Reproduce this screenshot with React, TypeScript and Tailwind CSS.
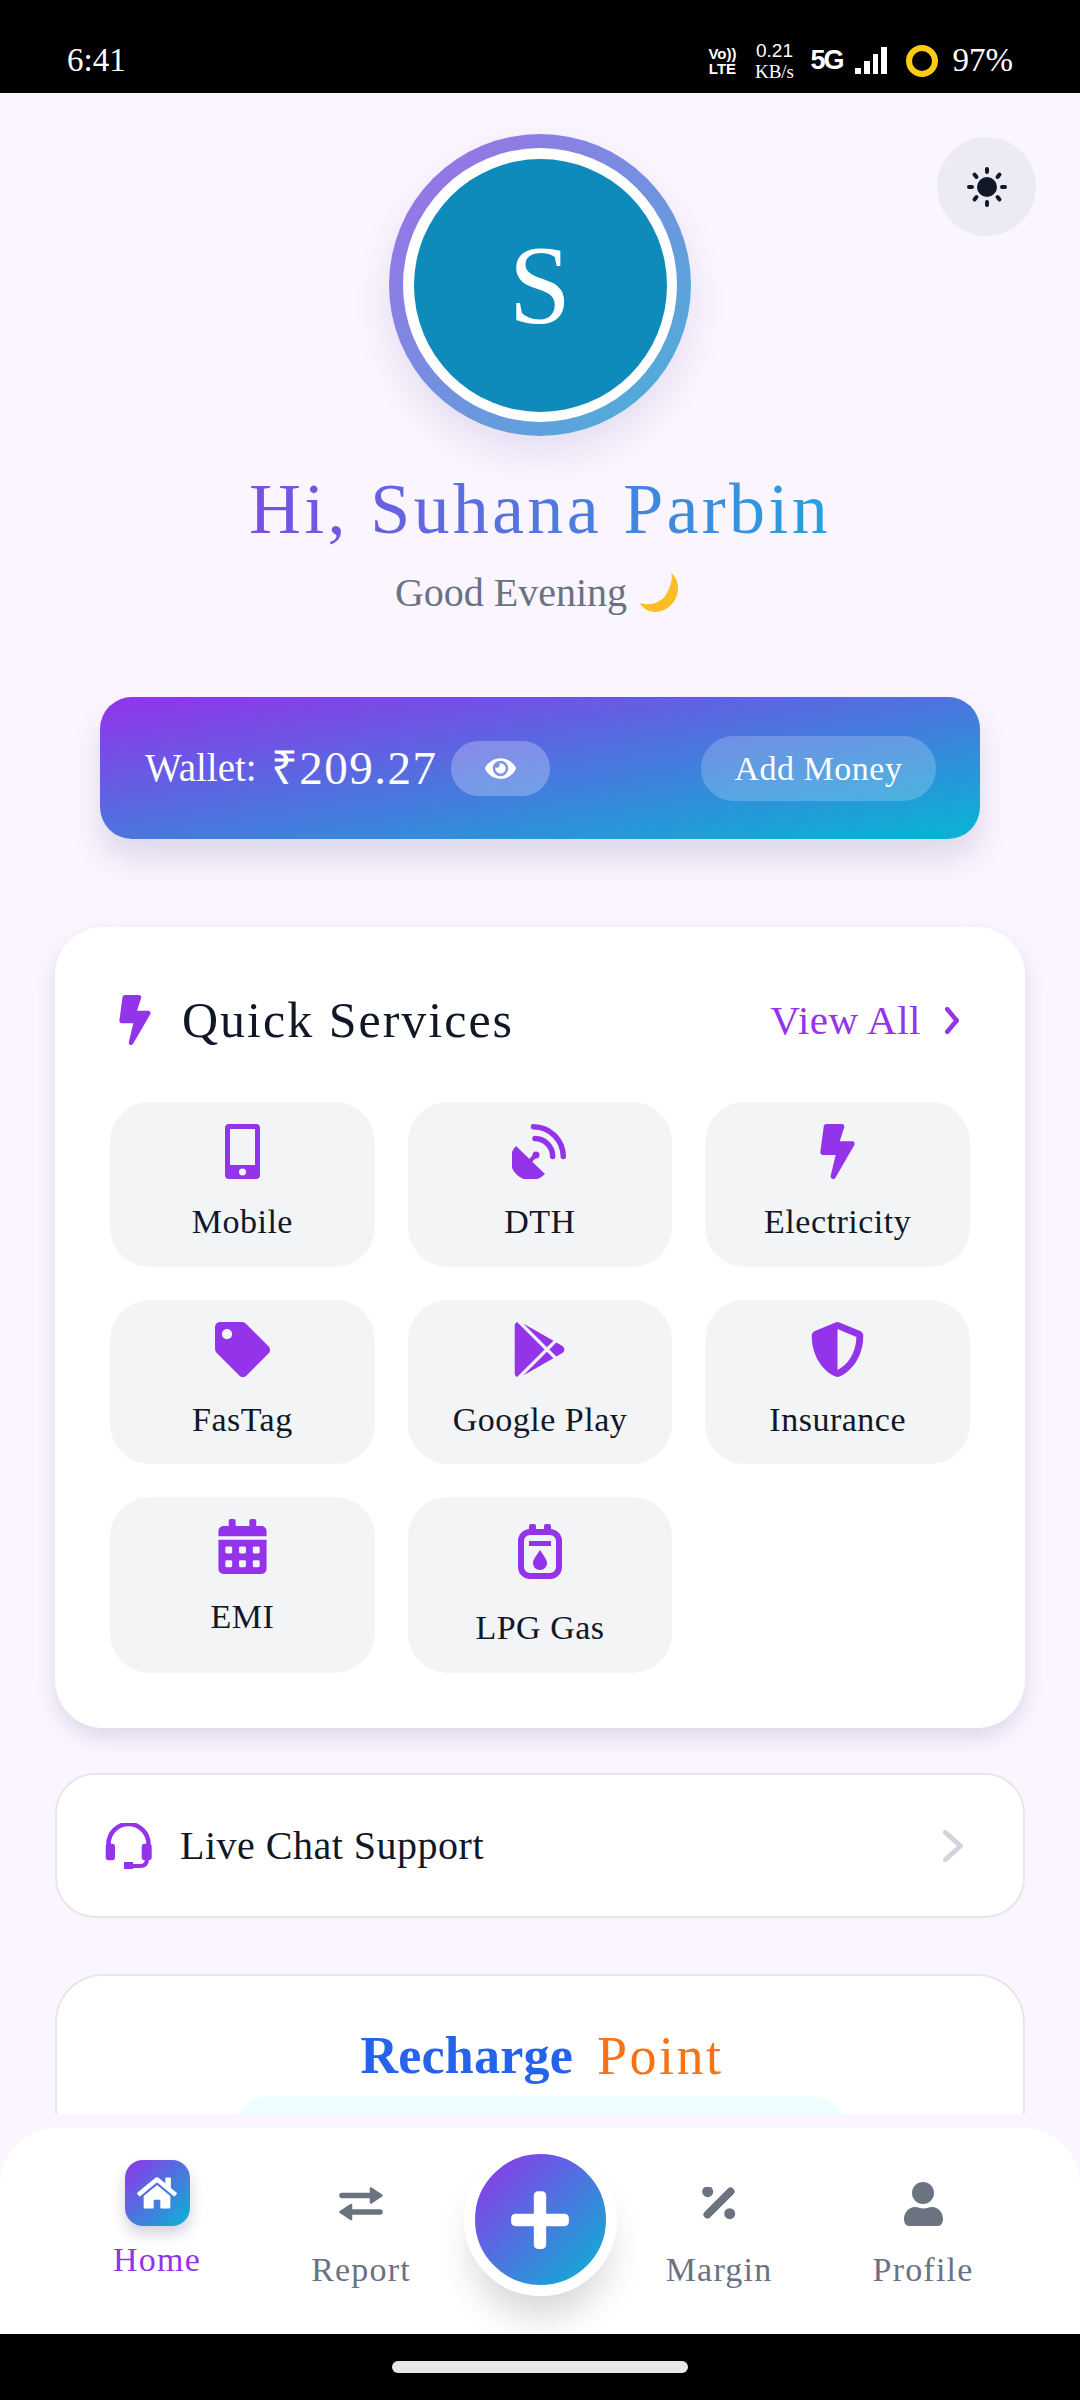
import type { ReactNode } from "react";
import {
	FaBolt,
	FaCalendarAlt,
	FaEye,
	FaGooglePlay,
	FaHome,
	FaPlus,
	FaShieldAlt,
	FaTag,
} from "react-icons/fa";

function GasIcon() {
	return (
		<svg width="44" height="55" viewBox="0 0 44 55" fill="none">
			<rect x="11" y="0" width="7" height="10" rx="2" fill="#9333ea" />
			<rect x="26" y="0" width="7" height="10" rx="2" fill="#9333ea" />
			<rect x="3" y="8" width="38" height="44" rx="9" stroke="#9333ea" strokeWidth="6" />
			<rect x="11" y="17" width="22" height="5" fill="#9333ea" />
			<path d="M22 26 C25 31 29 35 29 39 C29 43 26 46 22 46 C18 46 15 43 15 39 C15 35 19 31 22 26 Z" fill="#9333ea" />
		</svg>
	);
}

function SunIcon() {
	return (
		<svg width="40" height="40" viewBox="0 0 40 40" fill="none" stroke="#111827" strokeWidth="4" strokeLinecap="round">
			<circle cx="20" cy="20" r="10" fill="#111827" stroke="none" />
			<path d="M20 2v3M20 35v3M2 20h3M35 20h3M7.5 7.5l2 2.5M32.5 7.5l-2 2.5M7.5 32.5l2-2.5M32.5 32.5l-2-2.5" />
		</svg>
	);
}

function MobileIcon() {
	return (
		<svg width="35" height="55" viewBox="0 0 35 55" fill="#9333ea" fillRule="evenodd">
			<path d="M4 0h27a4 4 0 0 1 4 4v47a4 4 0 0 1-4 4H4a4 4 0 0 1-4-4V4a4 4 0 0 1 4-4Z M5 5v36h25V5Z M17.5 44.5a3.5 3.5 0 1 0 0 7 3.5 3.5 0 0 0 0-7Z" />
		</svg>
	);
}

function DishIcon() {
	return (
		<svg width="55" height="55" viewBox="0 0 55 55" fill="none">
			<path d="M4 22 A20 20 0 0 0 33 50 Z" fill="#9333ea" />
			<path d="M18 37 L24 31" stroke="#9333ea" strokeWidth="4" />
			<circle cx="24" cy="31" r="3.5" fill="#9333ea" />
			<path d="M23 14.5 A18 18 0 0 1 40.7 32.5" stroke="#9333ea" strokeWidth="5.5" strokeLinecap="round" />
			<path d="M21.5 2.8 A30 30 0 0 1 51.3 32.5" stroke="#9333ea" strokeWidth="5.5" strokeLinecap="round" />
		</svg>
	);
}

function HeadsetIcon() {
	return (
		<svg width="47" height="46" viewBox="0 0 47 46" fill="none" stroke="#9333ea">
			<path d="M3.5 24V21A20 20 0 0 1 43.5 21V24" strokeWidth="4.5" />
			<rect x="0.7" y="20.7" width="9.3" height="16.6" rx="3" fill="#9333ea" stroke="none" />
			<rect x="36.7" y="20.7" width="10" height="16.6" rx="3" fill="#9333ea" stroke="none" />
			<path d="M42 36C42 41 39 43 35 43H24" strokeWidth="4" />
			<rect x="19" y="39" width="9" height="7.3" fill="#9333ea" stroke="none" />
		</svg>
	);
}

function ExchangeIcon() {
	return (
		<svg width="44" height="34" viewBox="0 0 44 34" fill="#6b7280" stroke="#6b7280" strokeLinejoin="round">
			<path d="M3 8.5H33" strokeWidth="5.5" strokeLinecap="round" />
			<path d="M32 1.5L42.5 8.5L32 15.5Z" strokeWidth="2.5" />
			<path d="M41 25H11" strokeWidth="5.5" strokeLinecap="round" />
			<path d="M12 18L1.5 25L12 32Z" strokeWidth="2.5" />
		</svg>
	);
}

function PercentIcon() {
	return (
		<svg width="34" height="34" viewBox="0 0 34 34" fill="#6b7280">
			<circle cx="5.7" cy="4.7" r="5.5" />
			<circle cx="27.7" cy="26.7" r="5.5" />
			<path d="M5.5 27.5L28.5 4.5" stroke="#6b7280" strokeWidth="8" strokeLinecap="round" />
		</svg>
	);
}

function UserIcon() {
	return (
		<svg width="39" height="44" viewBox="0 0 39 44" fill="#6b7280">
			<circle cx="19" cy="11" r="11" />
			<path d="M0 37C0 30 5 25 11 25C14 25 16 26.5 19.5 26.5C23 26.5 25 25 28 25C34 25 39 30 39 37C39 41 37 44 34 44H5C2 44 0 41 0 37Z" />
		</svg>
	);
}

function Chevron({ color, w, h, stroke }: { color: string; w: number; h: number; stroke: number }) {
	const pad = stroke / 2;
	return (
		<svg width={w} height={h} viewBox={`0 0 ${w} ${h}`} fill="none" stroke={color} strokeWidth={stroke} strokeLinecap="round" strokeLinejoin="round">
			<path d={`M${pad} ${pad}L${w - pad} ${h / 2}L${pad} ${h - pad}`} />
		</svg>
	);
}

const services: { label: string; icon: ReactNode; tile: string; gap: string }[] = [
	{ label: "Mobile", icon: <MobileIcon />, tile: "pt-[22px]", gap: "mt-[21px]" },
	{ label: "DTH", icon: <DishIcon />, tile: "pt-[22px]", gap: "mt-[21px]" },
	{ label: "Electricity", icon: <FaBolt size={55} />, tile: "pt-[22px]", gap: "mt-[21px]" },
	{ label: "FasTag", icon: <FaTag size={55} />, tile: "pt-[22px]", gap: "mt-[21px]" },
	{ label: "Google Play", icon: <FaGooglePlay size={55} />, tile: "pt-[22px]", gap: "mt-[21px]" },
	{ label: "Insurance", icon: <FaShieldAlt size={55} />, tile: "pt-[22px]", gap: "mt-[21px]" },
	{ label: "EMI", icon: <FaCalendarAlt size={55} />, tile: "pt-[22px]", gap: "mt-[21px]" },
	{ label: "LPG Gas", icon: <GasIcon />, tile: "pt-[27px]", gap: "mt-[27px]" },
];

function StatusBar() {
	return (
		<div className="flex h-[93px] shrink-0 items-center bg-black pl-[67px] pr-[67px] pt-[28px] text-white">
			<span className="text-[33px] leading-none">6:41</span>
			<div className="ml-auto flex items-center">
				<div className="flex w-[28px] flex-col items-center font-['Liberation_Sans',sans-serif] text-[15px] font-bold leading-[15px]">
					<span>Vo))</span>
					<span>LTE</span>
				</div>
				<div className="ml-[11px] flex w-[54px] flex-col items-center text-[19px] leading-[21px]">
					<span className="font-['Liberation_Sans',sans-serif]">0.21</span>
					<span>KB/s</span>
				</div>
				<span className="ml-[9px] font-['Liberation_Sans',sans-serif] text-[27px] font-bold leading-none tracking-[-2px]">5G</span>
				<svg className="ml-[12px]" width="32" height="28" viewBox="0 0 32 28" fill="#fff">
					<rect x="0" y="21" width="6" height="6" />
					<rect x="9" y="14" width="6" height="13" />
					<rect x="18" y="7" width="5" height="20" />
					<rect x="26" y="0" width="6" height="27" />
				</svg>
				<svg className="ml-[19px]" width="32" height="32" viewBox="0 0 32 32" fill="none">
					<circle cx="16" cy="16" r="13" stroke="#facc15" strokeWidth="6" />
				</svg>
				<span className="ml-[15px] text-[33px] leading-none">97%</span>
			</div>
		</div>
	);
}

function Hero() {
	return (
		<div className="flex flex-col items-center pt-[41px]">
			<div className="flex h-[302px] w-[302px] items-center justify-center rounded-full bg-linear-to-br/srgb from-[#a26ce8] to-[#46b4d8] shadow-[0_18px_36px_rgba(80,60,140,0.12)]">
				<div className="flex h-[274px] w-[274px] items-center justify-center rounded-full bg-white">
					<div className="flex h-[253px] w-[253px] items-center justify-center rounded-full bg-[#0e8bbb] text-[112px] leading-none text-white">
						S
					</div>
				</div>
			</div>
			<h1 className="mt-[33px] bg-linear-to-r/srgb from-[#7a4fe0] to-[#2a9fdd] bg-clip-text text-[72px] leading-[80px] tracking-[3.3px] text-transparent">
				Hi, Suhana Parbin
			</h1>
			<div className="mt-[19px] flex items-center gap-[13px] text-[40px] leading-[50px] text-gray-500">
				<span>Good Evening</span>
				<svg width="45" height="41" viewBox="0 0 45 41">
					<path d="M31 0 C42 8 40 28 26 36 C15 42 4 38 0 30 C12 34 24 28 28 18 C31 11 33 5 31 0 Z" fill="#fbbf24" />
				</svg>
			</div>
		</div>
	);
}

function WalletCard() {
	return (
		<div className="mx-[100px] mt-[79px] flex h-[142px] items-center rounded-[32px] bg-linear-to-br/srgb from-[#9333ea] to-[#06b6d4] pl-[45px] pr-[44px] text-white shadow-[0_20px_30px_rgba(60,50,110,0.14)]">
			<span className="text-[39px]">Wallet:</span>
			<span className="ml-[14px] text-[47px] tracking-[1.5px]">₹209.27</span>
			<div className="ml-[14px] flex h-[55px] w-[99px] items-center justify-center rounded-full bg-white/25">
				<FaEye size={31} />
			</div>
			<div className="ml-auto flex h-[65px] w-[235px] items-center justify-center rounded-full bg-white/20 text-[34px] tracking-[0.5px]">
				Add Money
			</div>
		</div>
	);
}

function QuickServices() {
	return (
		<div className="mx-[55px] mt-[88px] rounded-[48px] bg-white px-[55px] pb-[55px] pt-[68px] shadow-[0_10px_20px_rgba(60,50,110,0.14)]">
			<div className="flex h-[50px] items-center">
				<FaBolt size={50} className="text-[#9333ea]" />
				<h2 className="ml-[22px] text-[50px] leading-none tracking-[2px] text-gray-900">Quick Services</h2>
				<span className="ml-auto text-[41px] leading-none tracking-[0.5px] text-[#9333ea]">View All</span>
				<div className="ml-[24px] mr-[11px]">
					<Chevron color="#9333ea" w={14} h={27} stroke={4.5} />
				</div>
			</div>
			<div className="mt-[57px] grid grid-cols-3 grid-rows-[165px_164px_176px] gap-[33px]">
				{services.map((s) => (
					<div key={s.label} className={`flex flex-col items-center rounded-[40px] bg-gray-100 ${s.tile}`}>
						<div className="flex h-[55px] items-center justify-center text-[#9333ea]">{s.icon}</div>
						<span className={`text-[34px] leading-[44px] tracking-[0.5px] text-gray-900 ${s.gap}`}>{s.label}</span>
					</div>
				))}
			</div>
		</div>
	);
}

function LiveChat() {
	return (
		<div className="mx-[55px] mt-[45px] flex h-[145px] items-center rounded-[40px] border-2 border-gray-200 bg-white pl-[48px] pr-[60px]">
			<HeadsetIcon />
			<span className="ml-[28px] text-[40px] tracking-[0.5px] text-gray-900">Live Chat Support</span>
			<div className="ml-auto">
				<Chevron color="#d1d5db" w={20} h={32} stroke={5} />
			</div>
		</div>
	);
}

function RechargePoint() {
	return (
		<div className="mx-[55px] mt-[56px] flex flex-col items-center rounded-t-[48px] border-2 border-gray-200 bg-white pb-[200px] pt-[50px]">
			<div className="flex h-[60px] items-center gap-[24px] pl-[4px]">
				<span className="text-[52px] font-bold leading-[60px] tracking-[0.2px] text-[#2563eb]">Recharge</span>
				<span className="text-[54px] leading-[60px] tracking-[2.5px] text-[#f97316]">Point</span>
			</div>
			<div className="mt-[10px] h-[160px] w-[612px] rounded-t-[36px] bg-cyan-50" />
		</div>
	);
}

function NavItem({ label, icon }: { label: string; icon: ReactNode }) {
	return (
		<div className="flex w-[204px] flex-col items-center pt-[54px] text-gray-500">
			<div className="flex h-[44px] items-center justify-center">{icon}</div>
			<span className="mt-[22px] text-[34px] leading-[44px] tracking-[1.2px]">{label}</span>
		</div>
	);
}

function BottomNav() {
	return (
		<div className="shrink-0 bg-purple-50 pt-[14px]">
			<div className="flex h-[206px] overflow-hidden rounded-t-[56px] bg-white px-[55px]">
				<div className="flex w-[204px] flex-col items-center pt-[32px]">
					<div className="flex h-[66px] w-[65px] items-center justify-center rounded-[18px] bg-linear-to-br/srgb from-[#9333ea] to-[#06b6d4] text-white shadow-[0_8px_14px_rgba(60,50,110,0.22)]">
						<FaHome size={40} />
					</div>
					<span className="mt-[12px] text-[34px] leading-[44px] tracking-[1.2px] text-[#9333ea]">Home</span>
				</div>
				<NavItem label="Report" icon={<ExchangeIcon />} />
				<div className="flex w-[154px] justify-center pt-[15px]">
					<div className="flex h-[153px] w-[153px] items-center justify-center rounded-full border-[11px] border-white bg-linear-to-br/srgb from-[#9333ea] to-[#06b6d4] text-white shadow-[0_28px_36px_-8px_rgba(0,0,0,0.16)]">
						<FaPlus size={66} />
					</div>
				</div>
				<NavItem label="Margin" icon={<PercentIcon />} />
				<NavItem label="Profile" icon={<UserIcon />} />
			</div>
		</div>
	);
}

export default function App() {
	return (
		<div className="flex h-[2400px] w-[1080px] flex-col overflow-hidden bg-purple-50 font-['Liberation_Serif',serif]">
			<StatusBar />
			<div className="relative min-h-0 flex-1 overflow-hidden">
				<button className="absolute right-[44px] top-[44px] flex h-[99px] w-[99px] items-center justify-center rounded-full bg-[#ecebf3]">
					<SunIcon />
				</button>
				<Hero />
				<WalletCard />
				<QuickServices />
				<LiveChat />
				<RechargePoint />
			</div>
			<BottomNav />
			<div className="flex h-[66px] shrink-0 items-start justify-center bg-black pt-[27px]">
				<div className="h-[12px] w-[296px] rounded-full bg-[#e8e8e8]" />
			</div>
		</div>
	);
}
